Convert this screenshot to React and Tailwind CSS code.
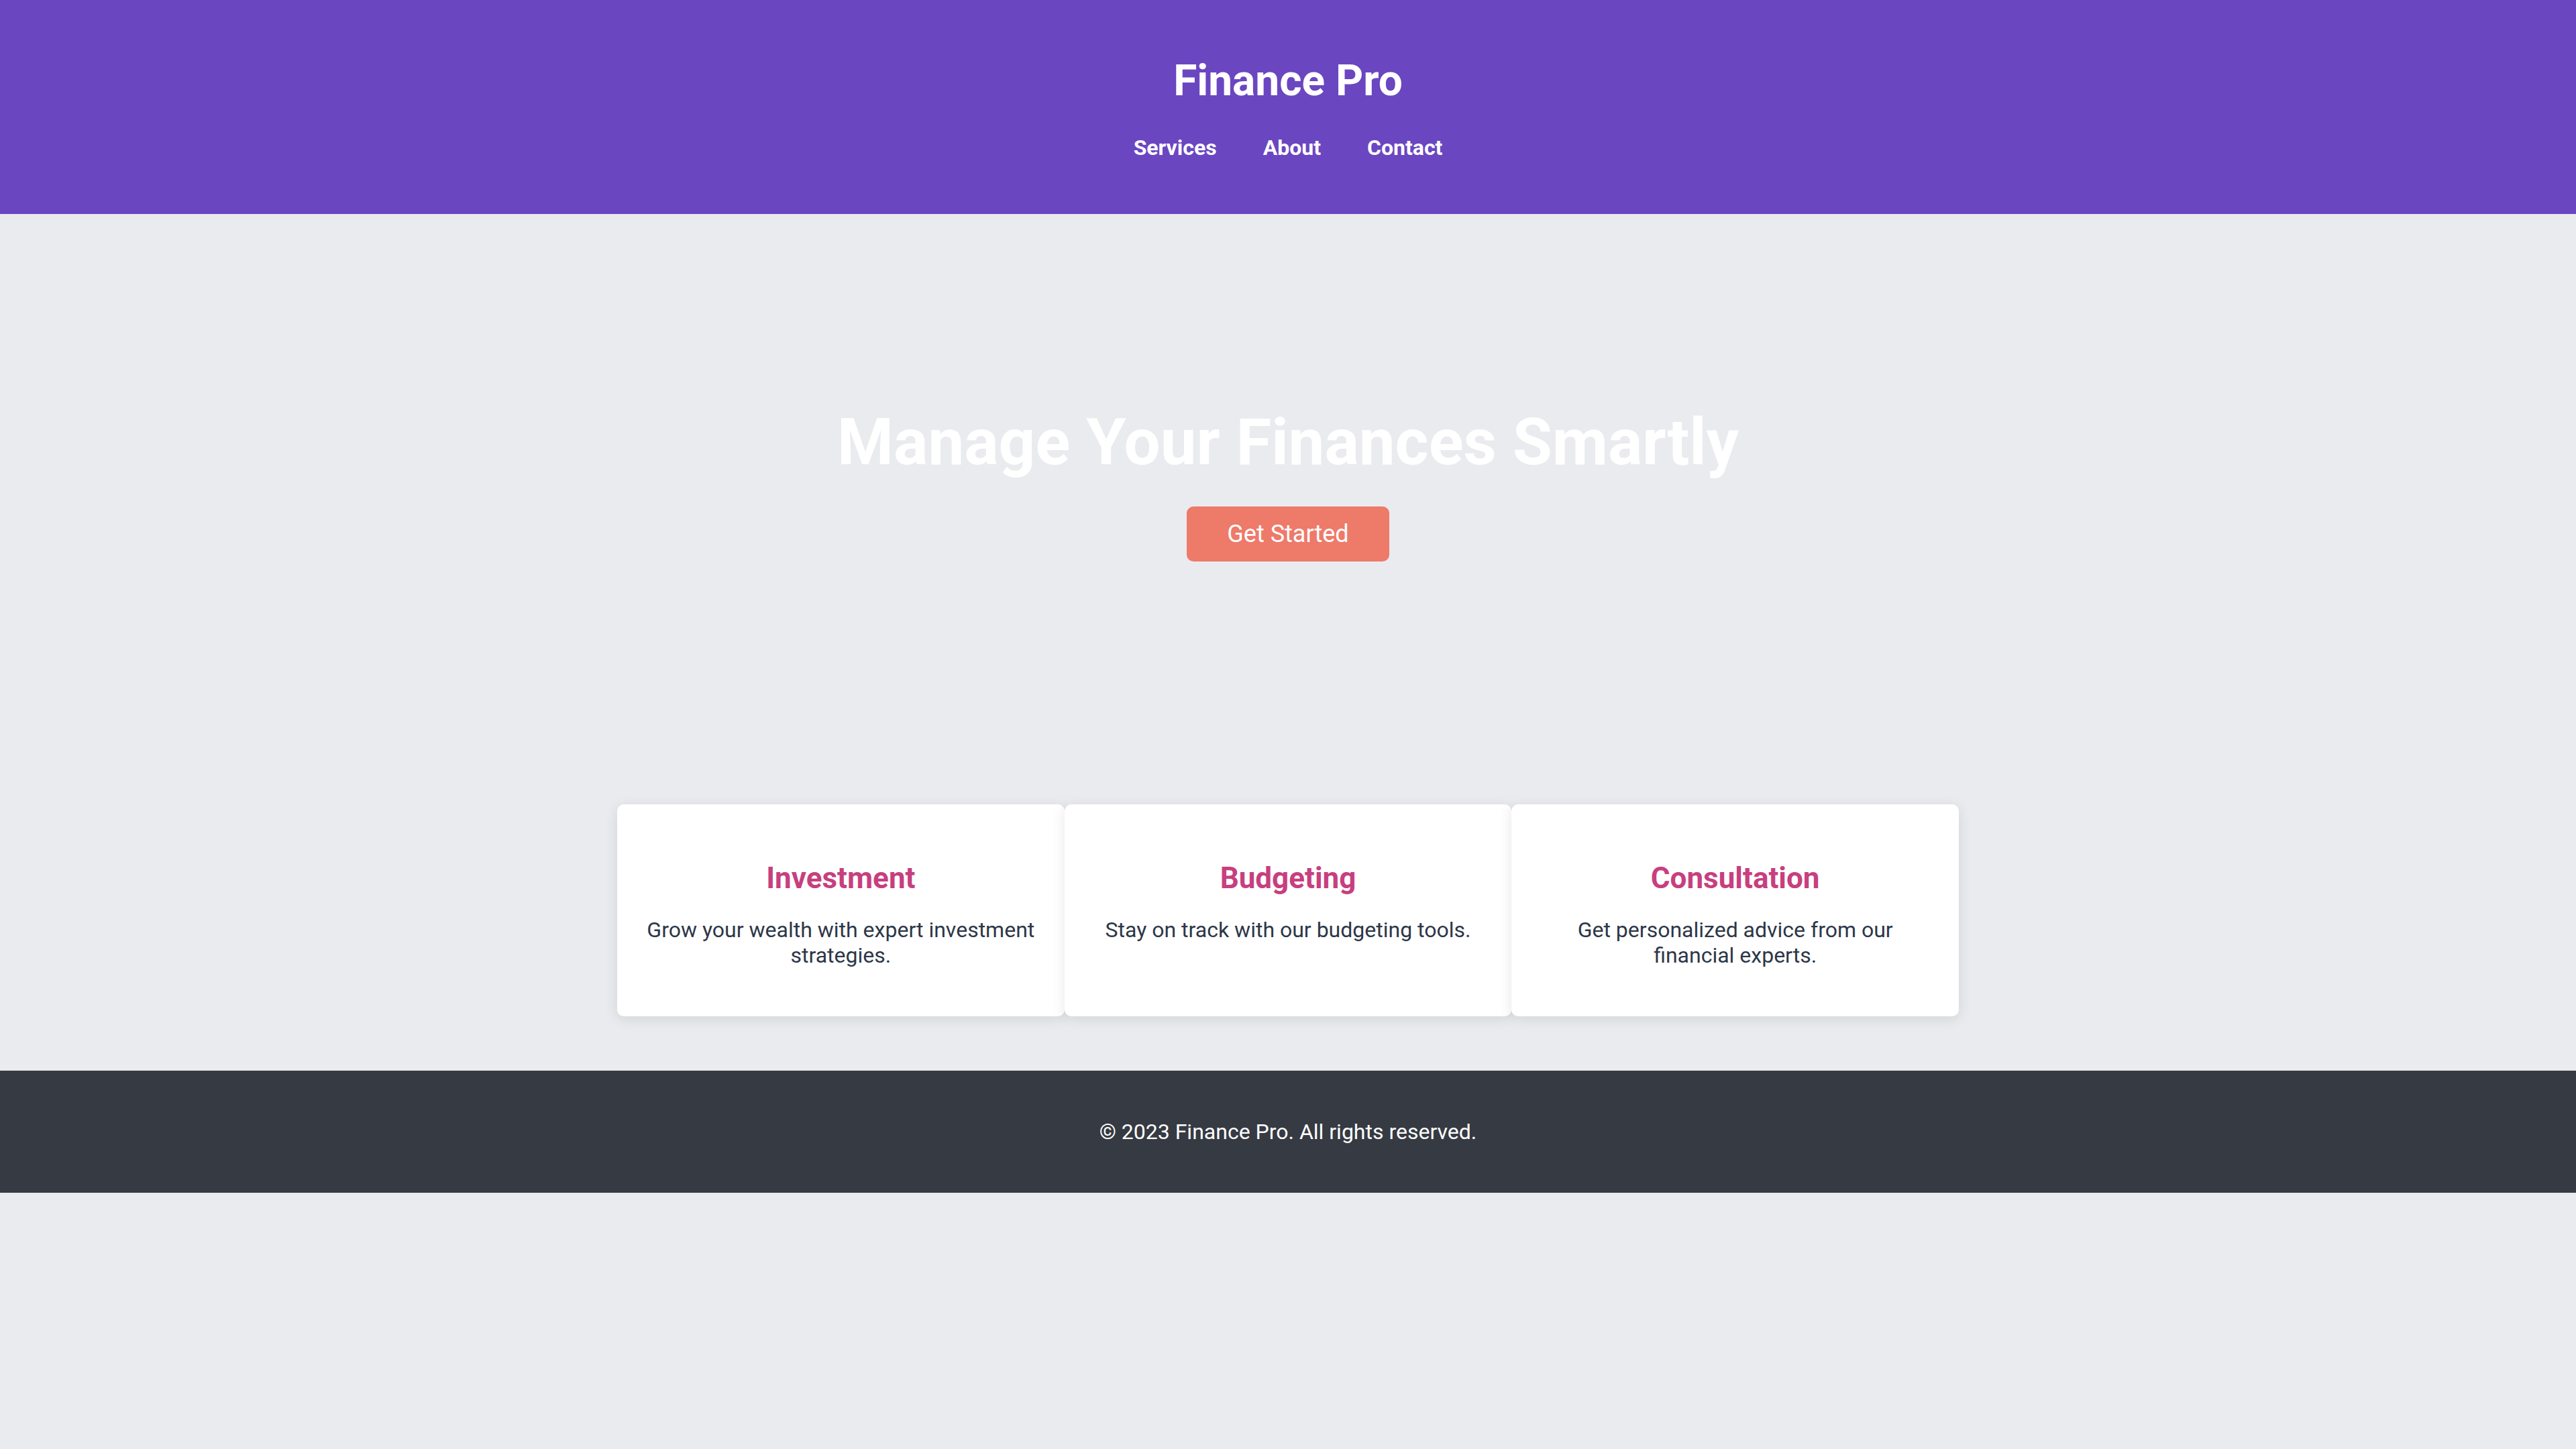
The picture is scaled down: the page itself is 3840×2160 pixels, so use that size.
const services = [
  { title: "Investment", text: "Grow your wealth with expert investment strategies." },
  { title: "Budgeting", text: "Stay on track with our budgeting tools." },
  { title: "Consultation", text: "Get personalized advice from our financial experts." },
];

const App = () => {
  return (
    <div className="min-h-screen bg-[#eaebef] font-['Roboto','Liberation_Sans',sans-serif] leading-[normal] text-[#2d3748]">
      <header className="bg-[#6b46c1] pt-[83px] pb-[80px] text-center text-white">
        <h1 className="mb-[43px] text-[64px] font-bold">Finance Pro</h1>
        <nav className="flex justify-center gap-[69px] text-[32px] font-bold">
          <a href="#services">Services</a>
          <a href="#about">About</a>
          <a href="#contact">Contact</a>
        </nav>
      </header>

      <section className="flex flex-col items-center pt-[284px] text-center">
        <h2 className="text-[96px] font-bold text-white">Manage Your Finances Smartly</h2>
        <button className="mt-[40px] rounded-[10px] bg-[#ee7a6a] px-[60px] py-[20px] text-[36px] text-white">
          Get Started
        </button>
      </section>

      <section id="services" className="mx-auto grid max-w-[2000px] grid-cols-3 pt-[362px] pb-[81px]">
        {services.map((s) => (
          <div
            key={s.title}
            className="rounded-[10px] bg-white px-[40px] pt-[84px] pb-[72px] text-center shadow-[0_4px_20px_rgba(0,0,0,0.1)]"
          >
            <h3 className="mb-[32px] text-[44px] font-bold text-[#c73f7f]">{s.title}</h3>
            <p className="text-[32px]">{s.text}</p>
          </div>
        ))}
      </section>

      <footer className="bg-[#363a42] py-[72px] text-center text-[32px] text-white">
        <p>© 2023 Finance Pro. All rights reserved.</p>
      </footer>
    </div>
  );
};

export default App;
